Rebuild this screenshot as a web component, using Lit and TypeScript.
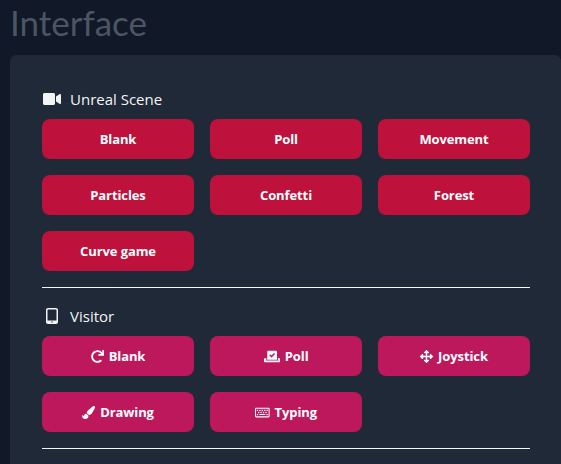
import { LitElement, html, css, svg } from "lit";
import { customElement } from "lit/decorators.js";

const icons: Record<string, { vb: string; d: string }> = {
  video: { vb: "0 0 576 512", d: "M336.2 64H47.8C21.4 64 0 85.4 0 111.8v288.4C0 426.6 21.4 448 47.8 448h288.4c26.4 0 47.8-21.4 47.8-47.8V111.8c0-26.4-21.4-47.8-47.8-47.8zm189.4 37.7L416 177.3v157.4l109.6 75.5c21.2 14.6 50.4-.3 50.4-25.8V127.5c0-25.4-29.1-40.4-50.4-25.8z" },
  mobile: { vb: "0 0 384 512", d: "M64 0h256c35 0 64 29 64 64v384c0 35-29 64-64 64H64c-35 0-64-29-64-64V64C0 29 29 0 64 0zm0 48c-9 0-16 7-16 16v336h288V64c0-9-7-16-16-16H64zm128 376c-13 0-24 8-24 20s11 20 24 20 24-8 24-20-11-20-24-20z" },
  redo: { vb: "0 0 512 512", d: "M500.33 0h-47.41a12 12 0 0 0-12 12.57l4 82.76A247.42 247.42 0 0 0 256 8C119.34 8 7.9 119.53 8 256.19 8.1 393.07 119.1 504 256 504a247.1 247.1 0 0 0 166.18-63.91 12 12 0 0 0 .48-17.43l-34-34a12 12 0 0 0-16.38-.55A176 176 0 1 1 402.1 157.8l-101.53-4.87a12 12 0 0 0-12.57 12v47.41a12 12 0 0 0 12 12h200.33a12 12 0 0 0 12-12V12a12 12 0 0 0-12-12z" },
  vote: { vb: "0 0 640 512", d: "M608 320h-64v64h22.4c5.3 0 9.6 3.6 9.6 8v16c0 4.4-4.3 8-9.6 8H73.6c-5.3 0-9.6-3.6-9.6-8v-16c0-4.4 4.3-8 9.6-8H96v-64H32c-17.7 0-32 14.3-32 32v96c0 17.7 14.3 32 32 32h576c17.7 0 32-14.3 32-32v-96c0-17.7-14.3-32-32-32zm-96 64V64.3c0-17.9-14.5-32.3-32.3-32.3H160.4C142.5 32 128 46.5 128 64.3V384h384zM211.2 202l25.5-25.3c4.2-4.2 11-4.2 15.2.1l41.3 41.6 95.2-94.4c4.2-4.2 11-4.2 15.2.1l25.3 25.5c4.2 4.2 4.2 11-.1 15.2L300.5 292c-4.2 4.2-11 4.2-15.2-.1l-74.1-74.7c-4.3-4.2-4.2-11 0-15.2z" },
  arrows: { vb: "0 0 512 512", d: "M352.201 425.775l-79.196 79.196c-9.373 9.373-24.568 9.373-33.941 0l-79.196-79.196c-15.119-15.119-4.411-40.971 16.971-40.97h51.162L228 284H127.196v51.162c0 21.382-25.851 32.09-40.971 16.971L7.029 272.937c-9.373-9.373-9.373-24.569 0-33.941L86.225 159.8c15.119-15.119 40.971-4.411 40.971 16.971V228H228V127.196h-51.23c-21.382 0-32.09-25.851-16.971-40.971l79.196-79.196c9.373-9.373 24.568-9.373 33.941 0l79.196 79.196c15.119 15.119 4.411 40.971-16.971 40.971h-51.162V228h100.804v-51.162c0-21.382 25.851-32.09 40.97-16.971l79.196 79.196c9.373 9.373 9.373 24.569 0 33.941L425.773 352.2c-15.119 15.119-40.971 4.411-40.97-16.971V284H284v100.804h51.23c21.382 0 32.09 25.851 16.971 40.971z" },
  brush: { vb: "0 0 512 512", d: "M167.02 309.34c-40.12 2.58-76.53 17.86-97.19 72.3-2.35 6.21-8 9.98-14.59 9.98-11.11 0-45.46-27.67-55.25-34.35C0 439.62 37.93 512 128 512c75.86 0 128-43.77 128-120.19 0-3.11-.65-6.08-.97-9.13l-88.01-73.34zM457.89 0c-15.16 0-29.37 6.71-40.21 16.45C213.27 199.05 192 203.34 192 257.09c0 13.7 3.25 26.76 8.73 38.7l63.82 53.18c7.21 1.8 14.64 3.03 22.39 3.03 62.11 0 98.11-45.47 211.16-256.46 7.38-14.35 13.9-29.85 13.9-45.99C512 20.64 486 0 457.89 0z" },
  keyboard: { vb: "0 0 576 512", d: "M528 64H48C21.49 64 0 85.49 0 112v288c0 26.51 21.49 48 48 48h480c26.51 0 48-21.49 48-48V112c0-26.51-21.49-48-48-48zm8 336c0 4.411-3.589 8-8 8H48c-4.411 0-8-3.589-8-8V112c0-4.411 3.589-8 8-8h480c4.411 0 8 3.589 8 8v288zM170 270v-28c0-6.627-5.373-12-12-12h-28c-6.627 0-12 5.373-12 12v28c0 6.627 5.373 12 12 12h28c6.627 0 12-5.373 12-12zm96 0v-28c0-6.627-5.373-12-12-12h-28c-6.627 0-12 5.373-12 12v28c0 6.627 5.373 12 12 12h28c6.627 0 12-5.373 12-12zm96 0v-28c0-6.627-5.373-12-12-12h-28c-6.627 0-12 5.373-12 12v28c0 6.627 5.373 12 12 12h28c6.627 0 12-5.373 12-12zm96 0v-28c0-6.627-5.373-12-12-12h-28c-6.627 0-12 5.373-12 12v28c0 6.627 5.373 12 12 12h28c6.627 0 12-5.373 12-12zm-336 82v-28c0-6.627-5.373-12-12-12H82c-6.627 0-12 5.373-12 12v28c0 6.627 5.373 12 12 12h28c6.627 0 12-5.373 12-12zm384 0v-28c0-6.627-5.373-12-12-12h-28c-6.627 0-12 5.373-12 12v28c0 6.627 5.373 12 12 12h28c6.627 0 12-5.373 12-12zM122 188v-28c0-6.627-5.373-12-12-12H82c-6.627 0-12 5.373-12 12v28c0 6.627 5.373 12 12 12h28c6.627 0 12-5.373 12-12zm96 0v-28c0-6.627-5.373-12-12-12h-28c-6.627 0-12 5.373-12 12v28c0 6.627 5.373 12 12 12h28c6.627 0 12-5.373 12-12zm96 0v-28c0-6.627-5.373-12-12-12h-28c-6.627 0-12 5.373-12 12v28c0 6.627 5.373 12 12 12h28c6.627 0 12-5.373 12-12zm96 0v-28c0-6.627-5.373-12-12-12h-28c-6.627 0-12 5.373-12 12v28c0 6.627 5.373 12 12 12h28c6.627 0 12-5.373 12-12zm96 0v-28c0-6.627-5.373-12-12-12h-28c-6.627 0-12 5.373-12 12v28c0 6.627 5.373 12 12 12h28c6.627 0 12-5.373 12-12zm-98 158v-16c0-6.627-5.373-12-12-12H180c-6.627 0-12 5.373-12 12v16c0 6.627 5.373 12 12 12h216c6.627 0 12-5.373 12-12z" },
};

const icon = (n: string) => html`<svg viewBox=${icons[n].vb} fill="currentColor" aria-hidden="true">${svg`<path d=${icons[n].d}></path>`}</svg>`;

const scene = ["Blank", "Poll", "Movement", "Particles", "Confetti", "Forest", "Curve game"];
const visitor: [string, string][] = [["redo", "Blank"], ["vote", "Poll"], ["arrows", "Joystick"], ["brush", "Drawing"], ["keyboard", "Typing"]];

@customElement("app-root")
export class AppRoot extends LitElement {
  static styles = css`
    :host { display: block; height: 464px; overflow: hidden; background: #111827; font-family: "Open Sans", "Noto Sans", sans-serif; }
    h1 { margin: 0; padding: 0 0 0 10px; height: 55px; font-family: Lato, "Open Sans", sans-serif; font-size: 35px; line-height: 44px; font-weight: 400; color: #4b5563; }
    .panel { margin-left: 10px; background: #1f2937; border-radius: 6px 6px 0 0; padding: 32px 31px 32px 32px; min-height: 409px; box-sizing: border-box; }
    .label { display: flex; align-items: center; height: 24px; color: #f3f4f6; font-size: 15px; margin-bottom: 8px; }
    .label svg { width: 18px; height: 16px; margin: 0 9px 0 1px; flex: none; }
    .grid { display: grid; grid-template-columns: repeat(3, 152px); gap: 16px; }
    .btn { height: 40px; border: 0; border-radius: 8px; color: #fff; font: 700 13px "Open Sans", "Noto Sans", sans-serif; letter-spacing: -0.1px; display: flex; align-items: center; justify-content: center; gap: 5px; padding: 0; }
    .rose { background: #be123c; }
    .pink { background: #be185d; }
    .btn svg { height: 13px; width: auto; }
    hr { border: 0; height: 1px; background: #f3f4f6; margin: 16px 0 16px; }
  `;
  render() {
    return html`
      <h1>Interface</h1>
      <div class="panel">
        <div class="label">${icon("video")}Unreal Scene</div>
        <div class="grid">${scene.map((s) => html`<button class="btn rose">${s}</button>`)}</div>
        <hr />
        <div class="label">${icon("mobile")}Visitor</div>
        <div class="grid">${visitor.map(([i, s]) => html`<button class="btn pink">${icon(i)}${s}</button>`)}</div>
        <hr />
      </div>
    `;
  }
}
